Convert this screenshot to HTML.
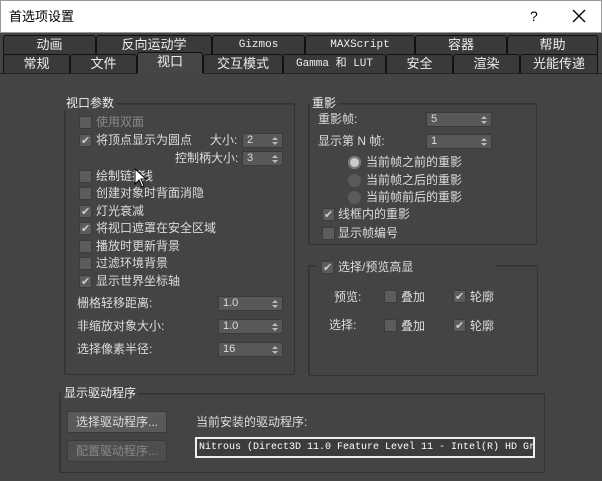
<!DOCTYPE html>
<html><head><meta charset="utf-8"><style>
*{margin:0;padding:0;box-sizing:border-box}
body{width:602px;height:481px;background:#444;font-family:"Liberation Sans","Noto Sans CJK SC",sans-serif;font-size:12px;color:#ddd;position:relative;overflow:hidden}
.a{position:absolute;white-space:nowrap;line-height:14px}
.title{position:absolute;left:0;top:0;width:602px;height:33px;background:#fff;color:#000;border:1px solid #999}
.tab{position:absolute;height:20px;background:#3a3a3a;border:1px solid #111;border-bottom:none;border-radius:3px 3px 0 0;color:#eee;text-align:center;font-size:13px;line-height:18px}
.mono{font-family:"Liberation Mono","Noto Sans CJK SC",monospace;font-size:11px}
.grp{position:absolute;border:1px solid #333;border-radius:2px;box-shadow:inset 1px 1px 0 #3a3a3a}
.lbl{position:absolute;background:#444;padding:0 2px;color:#eee;font-size:12px;line-height:14px}
.cb{position:absolute;width:13px;height:13px;background:#5c5c5c;border:1px solid #3c3c3c}
.cb.c::after{content:"✔";position:absolute;left:1px;top:-1px;font-size:11px;color:#ccc;line-height:14px}
.sp{position:absolute;height:15px;background:#585858;border:1px solid #3a3a3a;color:#ddd;font-size:11px;line-height:13px;padding-left:4px}
.sp::after{content:"";position:absolute;right:4px;top:3px;border:3px solid transparent;border-bottom:3px solid #bbb;border-top:0}
.sp::before{content:"";position:absolute;right:4px;top:8px;border:3px solid transparent;border-top:3px solid #bbb;border-bottom:0}
.rd{position:absolute;width:13px;height:13px;border-radius:50%;background:#5a5a5a}
.btn{position:absolute;width:100px;height:22px;background:#595959;border:1px solid #3a3a3a;border-radius:2px;text-align:center;line-height:20px;font-size:12px}
</style></head><body>
<div class="title"><div class="a" style="left:8px;top:9px;font-size:13px">首选项设置</div><div class="a" style="left:529px;top:8px;font-size:14px">?</div><svg style="position:absolute;left:571px;top:8px" width="14" height="14"><path d="M1 1L13 13M13 1L1 13" stroke="#000" stroke-width="1.3"/></svg></div>

<div class="tab" style="left:3px;top:35px;width:93px">动画</div>
<div class="tab" style="left:96px;top:35px;width:116px">反向运动学</div>
<div class="tab mono" style="left:212px;top:35px;width:93px;line-height:18px">Gizmos</div>
<div class="tab mono" style="left:305px;top:35px;width:110px;line-height:18px">MAXScript</div>
<div class="tab" style="left:415px;top:35px;width:92px">容器</div>
<div class="tab" style="left:507px;top:35px;width:91px">帮助</div>
<div class="tab" style="left:3px;top:54px;width:67px">常规</div>
<div class="tab" style="left:70px;top:54px;width:67px">文件</div>
<div class="tab" style="left:137px;top:52px;width:66px;height:22px;background:#464646;border-bottom:none">视口</div>
<div class="tab" style="left:203px;top:54px;width:80px">交互模式</div>
<div class="tab mono" style="left:283px;top:54px;width:103px;line-height:18px">Gamma 和 LUT</div>
<div class="tab" style="left:386px;top:54px;width:67px">安全</div>
<div class="tab" style="left:453px;top:54px;width:67px">渲染</div>
<div class="tab" style="left:520px;top:54px;width:78px">光能传递</div>
<div style="position:absolute;left:0;top:73px;width:602px;height:1px;background:#222"></div>
<div style="position:absolute;left:137px;top:73px;width:66px;height:1px;background:#464646"></div>

<div class="grp" style="left:64px;top:103px;width:231px;height:272px"></div>
<div class="lbl" style="left:64px;top:96px">视口参数</div>
<div class="cb" style="left:79px;top:116px"></div><div class="a" style="left:96px;top:115px;color:#888">使用双面</div>
<div class="cb c" style="left:79px;top:134px"></div><div class="a" style="left:96px;top:133px">将顶点显示为圆点</div>
<div class="a" style="left:210px;top:133px">大小:</div><div class="sp" style="left:242px;top:133px;width:41px">2</div>
<div class="a" style="left:175px;top:151px">控制柄大小:</div><div class="sp" style="left:242px;top:151px;width:41px">3</div>
<div class="cb" style="left:79px;top:170px"></div><div class="a" style="left:96px;top:169px">绘制链接</div>
<div class="a" style="left:141px;top:169px">线</div>
<div class="cb" style="left:79px;top:187px"></div><div class="a" style="left:96px;top:186px">创建对象时背面消隐</div>
<div class="cb c" style="left:79px;top:205px"></div><div class="a" style="left:96px;top:204px">灯光衰减</div>
<div class="cb c" style="left:79px;top:222px"></div><div class="a" style="left:96px;top:221px">将视口遮罩在安全区域</div>
<div class="cb" style="left:79px;top:240px"></div><div class="a" style="left:96px;top:239px">播放时更新背景</div>
<div class="cb" style="left:79px;top:257px"></div><div class="a" style="left:96px;top:256px">过滤环境背景</div>
<div class="cb c" style="left:79px;top:275px"></div><div class="a" style="left:96px;top:274px">显示世界坐标轴</div>
<div class="a" style="left:77px;top:296px">栅格轻移距离:</div><div class="sp" style="left:218px;top:296px;width:65px">1.0</div>
<div class="a" style="left:77px;top:319px">非缩放对象大小:</div><div class="sp" style="left:218px;top:319px;width:65px">1.0</div>
<div class="a" style="left:77px;top:342px">选择像素半径:</div><div class="sp" style="left:218px;top:342px;width:65px">16</div>
<svg style="position:absolute;left:134px;top:168px" width="14" height="20"><path d="M1 1 L1 16 L5 12 L8 19 L10 18 L7 11 L12 11 Z" fill="#fff" stroke="#000" stroke-width="1"/></svg>

<div class="grp" style="left:308px;top:103px;width:229px;height:142px"></div>
<div class="lbl" style="left:310px;top:96px">重影</div>
<div class="a" style="left:318px;top:112px">重影帧:</div><div class="sp" style="left:426px;top:112px;width:66px">5</div>
<div class="a" style="left:318px;top:134px">显示第 N 帧:</div><div class="sp" style="left:426px;top:134px;width:66px">1</div>
<div class="rd" style="left:348px;top:156px;background:#ccc;box-shadow:inset 0 0 0 2px #777"></div><div class="a" style="left:366px;top:155px">当前帧之前的重影</div>
<div class="rd" style="left:348px;top:174px"></div><div class="a" style="left:366px;top:173px">当前帧之后的重影</div>
<div class="rd" style="left:348px;top:191px"></div><div class="a" style="left:366px;top:190px">当前帧前后的重影</div>
<div class="cb c" style="left:322px;top:208px"></div><div class="a" style="left:338px;top:207px">线框内的重影</div>
<div class="cb" style="left:322px;top:227px"></div><div class="a" style="left:338px;top:226px">显示帧编号</div>

<div class="grp" style="left:308px;top:265px;width:230px;height:111px"></div>
<div style="position:absolute;left:316px;top:258px;width:180px;height:14px;background:#444"></div>
<div class="cb c" style="left:321px;top:261px"></div><div class="a" style="left:338px;top:260px">选择/预览高显</div>
<div class="a" style="left:334px;top:290px">预览:</div>
<div class="cb" style="left:384px;top:290px"></div><div class="a" style="left:401px;top:290px">叠加</div>
<div class="cb c" style="left:453px;top:290px"></div><div class="a" style="left:470px;top:290px">轮廓</div>
<div class="a" style="left:329px;top:318px">选择:</div>
<div class="cb" style="left:384px;top:319px"></div><div class="a" style="left:401px;top:319px">叠加</div>
<div class="cb c" style="left:453px;top:319px"></div><div class="a" style="left:470px;top:319px">轮廓</div>

<div class="grp" style="left:59px;top:393px;width:486px;height:80px"></div>
<div class="lbl" style="left:62px;top:386px">显示驱动程序</div>
<div class="btn" style="left:67px;top:411px;color:#ddd">选择驱动程序...</div>
<div class="btn" style="left:67px;top:440px;color:#888;background:#4e4e4e">配置驱动程序...</div>
<div class="a" style="left:196px;top:415px">当前安装的驱动程序:</div>
<div style="position:absolute;left:195px;top:437px;width:340px;height:21px;border:2px solid #eee;background:#3c3c3c;color:#fff;font-family:'Liberation Mono',monospace;font-size:10px;line-height:17px;padding-left:2px;overflow:hidden;white-space:nowrap">Nitrous (Direct3D 11.0 Feature Level 11 - Intel(R) HD Gr</div>
</body></html>
